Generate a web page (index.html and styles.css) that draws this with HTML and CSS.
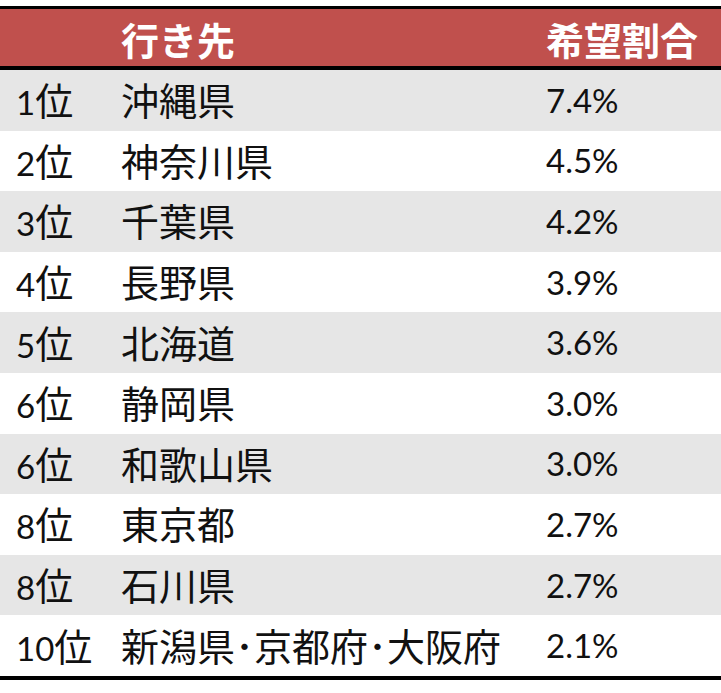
FILE: index.html
```html
<!DOCTYPE html>
<html lang="ja">
<head>
<meta charset="utf-8">
<title>行き先 希望割合</title>
<link rel="stylesheet" href="styles.css">
</head>
<body>
<div class="table">
  <div class="head">
    <span class="cell rank"></span>
    <span class="cell name">行き先</span>
    <span class="cell pct">希望割合</span>
  </div>
  <div class="row odd"><span class="cell rank"><span class="num">1</span>位</span><span class="cell name">沖縄県</span><span class="cell pct num">7.4%</span></div>
  <div class="row"><span class="cell rank"><span class="num">2</span>位</span><span class="cell name">神奈川県</span><span class="cell pct num">4.5%</span></div>
  <div class="row odd"><span class="cell rank"><span class="num">3</span>位</span><span class="cell name">千葉県</span><span class="cell pct num">4.2%</span></div>
  <div class="row"><span class="cell rank"><span class="num">4</span>位</span><span class="cell name">長野県</span><span class="cell pct num">3.9%</span></div>
  <div class="row odd"><span class="cell rank"><span class="num">5</span>位</span><span class="cell name">北海道</span><span class="cell pct num">3.6%</span></div>
  <div class="row"><span class="cell rank"><span class="num">6</span>位</span><span class="cell name">静岡県</span><span class="cell pct num">3.0%</span></div>
  <div class="row odd"><span class="cell rank"><span class="num">6</span>位</span><span class="cell name">和歌山県</span><span class="cell pct num">3.0%</span></div>
  <div class="row"><span class="cell rank"><span class="num">8</span>位</span><span class="cell name">東京都</span><span class="cell pct num">2.7%</span></div>
  <div class="row odd"><span class="cell rank"><span class="num">8</span>位</span><span class="cell name">石川県</span><span class="cell pct num">2.7%</span></div>
  <div class="row last"><span class="cell rank"><span class="num">10</span>位</span><span class="cell name">新潟県･京都府･大阪府</span><span class="cell pct num">2.1%</span></div>
</div>
</body>
</html>
```

FILE: styles.css
```css
html, body {
  margin: 0;
  padding: 0;
  background: #ffffff;
}

body {
  font-family: "Lato", "Noto Sans CJK JP", sans-serif;
  color: #111111;
}

.table {
  width: 721px;
  margin-top: 6px;
  display: flex;
  flex-direction: column;
  border-bottom: 4px solid #000000;
}

.head,
.row {
  display: grid;
  grid-template-columns: 121px 425px 1fr;
  align-items: center;
  font-size: 38px;
  line-height: 1;
}

.head {
  height: 54px;
  padding-top: 3px;
  background: #c0504d;
  color: #ffffff;
  font-weight: bold;
  font-family: "Noto Sans CJK JP", sans-serif;
  border-top: 3px solid #000000;
  border-bottom: 4px solid #000000;
}

.row {
  height: 60.6px;
  background: #ffffff;
}

.row.odd {
  background: #e6e6e6;
}

.cell {
  white-space: nowrap;
}

.rank {
  padding-left: 16px;
}

.num {
  font-family: "Lato", sans-serif;
  font-size: 33px;
}
```
